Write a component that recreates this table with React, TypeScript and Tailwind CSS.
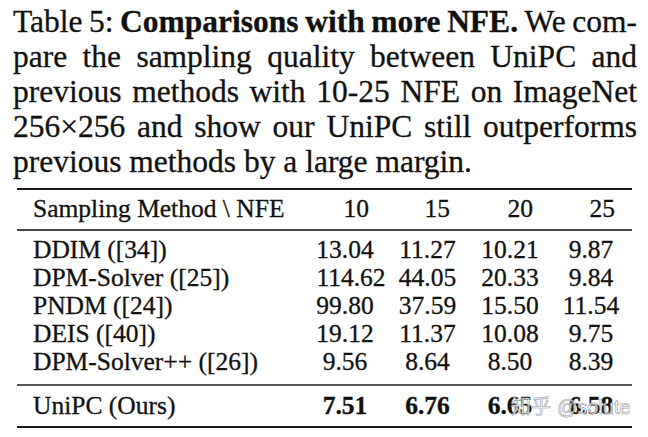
import React from "react";

type Word = { t: string; b?: boolean };

const captionLines: Word[][] = [
  [
    { t: "Table" },
    { t: "5:" },
    { t: "Comparisons", b: true },
    { t: "with", b: true },
    { t: "more", b: true },
    { t: "NFE.", b: true },
    { t: "We" },
    { t: "com-" },
  ],
  "pare the sampling quality between UniPC and".split(" ").map((t) => ({ t })),
  "previous methods with 10-25 NFE on ImageNet".split(" ").map((t) => ({ t })),
  "256×256 and show our UniPC still outperforms".split(" ").map((t) => ({ t })),
];

const rows: { name: string; vals: string[] }[] = [
  { name: "DDIM ([34])", vals: ["13.04", "11.27", "10.21", "9.87"] },
  { name: "DPM-Solver ([25])", vals: ["114.62", "44.05", "20.33", "9.84"] },
  { name: "PNDM ([24])", vals: ["99.80", "37.59", "15.50", "11.54"] },
  { name: "DEIS ([40])", vals: ["19.12", "11.37", "10.08", "9.75"] },
  { name: "DPM-Solver++ ([26])", vals: ["9.56", "8.64", "8.50", "8.39"] },
];

const grid = "grid grid-cols-[271px_82px_83px_82px_80px] pl-[16px]";

export default function App() {
  return (
    <div className="relative w-[648px] h-[437px] overflow-hidden bg-white text-[#111] [font-family:'Liberation_Serif','Times_New_Roman',serif] [-webkit-text-stroke:0.3px_#111]">
      {/* Caption */}
      <div className="ml-[13px] w-[624px] pt-[4px] text-[31.5px] leading-[35px]">
        {captionLines.map((line, i) => (
          <div key={i} className="flex justify-between whitespace-nowrap">
            {line.map((w, j) => (
              <span key={j} className={w.b ? "font-bold" : ""}>
                {w.t}
              </span>
            ))}
          </div>
        ))}
        <div className="whitespace-nowrap">previous methods by a large margin.</div>
      </div>

      {/* Table */}
      <div className="mt-[9px] ml-[17px] w-[615px] text-[25.5px] leading-[28px]">
        <div className="h-[2px] bg-[#1a1a1a]" />
        <div className={`${grid} pt-[5px] pb-[6px]`}>
          <div>Sampling Method \ NFE</div>
          <div className="text-right pr-[17px]">10</div>
          <div className="text-right pr-[19px]">15</div>
          <div className="text-right pr-[18px]">20</div>
          <div className="text-right pr-[16px]">25</div>
        </div>
        <div className="h-[2px] bg-[#444]" />
        <div className="pt-[5px] pb-[8px]">
          {rows.map((r) => (
            <div key={r.name} className={grid}>
              <div>{r.name}</div>
              {r.vals.map((v, k) => (
                <div
                  key={k}
                  className={v === "114.62" ? "text-center pl-[12px]" : "text-center"}
                >
                  {v}
                </div>
              ))}
            </div>
          ))}
        </div>
        <div className="h-[2px] bg-[#555]" />
        <div className={`${grid} pt-[6px] pb-[6px]`}>
          <div>UniPC (Ours)</div>
          <div className="text-center font-bold">7.51</div>
          <div className="text-center font-bold">6.76</div>
          <div className="text-center font-bold">6.65</div>
          <div className="text-center font-bold">6.58</div>
        </div>
        <div className="h-[2px] bg-[#1a1a1a]" />
      </div>

      {/* Watermark */}
      <div className="absolute left-[511px] top-[394px] flex items-baseline gap-[6px] text-[20px] leading-[24px] text-white/80 [-webkit-text-stroke:0.6px_#9a9a9a] [font-family:'Noto_Sans_CJK_SC','Liberation_Sans',sans-serif]">
        <span>知乎</span>
        <span className="[font-family:'Liberation_Sans',sans-serif]">@solute</span>
      </div>
    </div>
  );
}
